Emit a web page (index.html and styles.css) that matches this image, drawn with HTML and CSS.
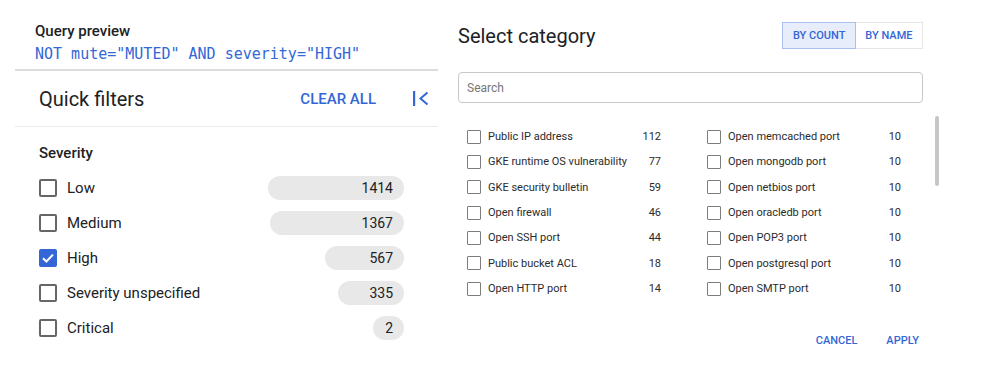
FILE: index.html
```html
<!DOCTYPE html>
<html>

<head>
    <meta charset="UTF-8">
    <title>Findings filters</title>
    <link rel="stylesheet" href="styles.css">
</head>

<body>
    <div class="page">
        <section class="filters">
            <div class="query">
                <div class="query-label">Query preview</div>
                <code class="query-text">NOT mute="MUTED" AND severity="HIGH"</code>
            </div>

            <div class="qf-header">
                <h2>Quick filters</h2>
                <button class="text-btn clear-all">CLEAR ALL</button>
                <svg class="collapse" width="16" height="16" viewBox="0 0 16 16">
                    <rect x="0" y="0" width="2.2" height="15" fill="#3367d6" />
                    <polyline points="14.5,1.5 7.5,7.5 14.5,13.5" fill="none" stroke="#3367d6" stroke-width="2" />
                </svg>
            </div>

            <div class="group">
                <h3>Severity</h3>
                <ul class="options">
                    <li class="option">
                        <span class="box"></span>
                        <span class="name">Low</span>
                        <span class="pill" style="width: 136px">1414</span>
                    </li>
                    <li class="option">
                        <span class="box"></span>
                        <span class="name">Medium</span>
                        <span class="pill" style="width: 134px">1367</span>
                    </li>
                    <li class="option">
                        <span class="box checked">
                            <svg width="14" height="14" viewBox="0 0 14 14">
                                <polyline points="2,7.2 5.4,10.5 12,3.6" fill="none" stroke="#fff" stroke-width="2" />
                            </svg>
                        </span>
                        <span class="name">High</span>
                        <span class="pill" style="width: 79px">567</span>
                    </li>
                    <li class="option">
                        <span class="box"></span>
                        <span class="name">Severity unspecified</span>
                        <span class="pill" style="width: 66px">335</span>
                    </li>
                    <li class="option">
                        <span class="box"></span>
                        <span class="name">Critical</span>
                        <span class="pill" style="width: 31px">2</span>
                    </li>
                </ul>
            </div>
        </section>

        <section class="category">
            <div class="cat-header">
                <h2>Select category</h2>
                <div class="toggle">
                    <button class="active">BY COUNT</button>
                    <button>BY NAME</button>
                </div>
            </div>

            <input class="search" type="text" placeholder="Search">

            <ul class="cat-list">
                <li class="cat-item"><span class="box"></span><span class="name">Public IP address</span><span class="count">112</span></li>
                <li class="cat-item"><span class="box"></span><span class="name">GKE runtime OS vulnerability</span><span class="count">77</span></li>
                <li class="cat-item"><span class="box"></span><span class="name">GKE security bulletin</span><span class="count">59</span></li>
                <li class="cat-item"><span class="box"></span><span class="name">Open firewall</span><span class="count">46</span></li>
                <li class="cat-item"><span class="box"></span><span class="name">Open SSH port</span><span class="count">44</span></li>
                <li class="cat-item"><span class="box"></span><span class="name">Public bucket ACL</span><span class="count">18</span></li>
                <li class="cat-item"><span class="box"></span><span class="name">Open HTTP port</span><span class="count">14</span></li>
                <li class="cat-item"><span class="box"></span><span class="name">Open memcached port</span><span class="count">10</span></li>
                <li class="cat-item"><span class="box"></span><span class="name">Open mongodb port</span><span class="count">10</span></li>
                <li class="cat-item"><span class="box"></span><span class="name">Open netbios port</span><span class="count">10</span></li>
                <li class="cat-item"><span class="box"></span><span class="name">Open oracledb port</span><span class="count">10</span></li>
                <li class="cat-item"><span class="box"></span><span class="name">Open POP3 port</span><span class="count">10</span></li>
                <li class="cat-item"><span class="box"></span><span class="name">Open postgresql port</span><span class="count">10</span></li>
                <li class="cat-item"><span class="box"></span><span class="name">Open SMTP port</span><span class="count">10</span></li>
            </ul>

            <!-- scrollbar thumb of the category list -->
            <div class="thumb"></div>

            <div class="cat-actions">
                <button class="text-btn">CANCEL</button>
                <button class="text-btn">APPLY</button>
            </div>
        </section>
    </div>
</body>

</html>
```

FILE: styles.css
```css
body {
    margin: 0;
    background: #fff;
    font-family: Roboto, "Liberation Sans", sans-serif;
    color: #202124;
}

button {
    border: none;
    background: none;
    padding: 0;
    font-family: inherit;
    cursor: pointer;
}

ul {
    list-style: none;
    margin: 0;
    padding: 0;
}

h2,
h3 {
    margin: 0;
    font-weight: 400;
}

.page {
    display: flex;
    gap: 20px;
    padding-left: 15px;
}

/* left panel */

.filters {
    width: 423px;
}

.query {
    padding: 21px 20px 5px;
    border-bottom: 2px solid #dcdcdc;
}

.query-label {
    font-size: 15px;
    font-weight: 500;
    line-height: 20px;
}

.query-text {
    display: block;
    margin-top: 3px;
    font-family: "DejaVu Sans Mono", "Liberation Mono", monospace;
    font-size: 15px;
    line-height: 20px;
    color: #3367d6;
}

.qf-header {
    display: flex;
    align-items: center;
    height: 55px;
    padding: 0 9px 0 24px;
    border-bottom: 1px solid #ebebeb;
}

.qf-header h2 {
    flex: 1;
    font-size: 20px;
    line-height: 28px;
}

.text-btn {
    color: #3367d6;
    font-weight: 500;
}

.clear-all {
    font-size: 15px;
    margin-right: 37px;
}

.group {
    padding: 16px 34px 0 24px;
}

.group h3 {
    font-size: 15px;
    font-weight: 500;
    line-height: 20px;
    margin-bottom: 8px;
}

.option {
    display: flex;
    align-items: center;
    height: 34.8px;
}

.box {
    flex: none;
    box-sizing: border-box;
    width: 18px;
    height: 18px;
    border: 2px solid #666;
    border-radius: 2px;
    margin-right: 10px;
    display: flex;
    align-items: center;
    justify-content: center;
}

.box.checked {
    background: #3367d6;
    border-color: #3367d6;
}

.option .name {
    flex: 1;
    font-size: 15px;
}

.pill {
    box-sizing: border-box;
    height: 24px;
    line-height: 24px;
    padding-right: 11px;
    border-radius: 12px;
    background: #e8e8e8;
    text-align: right;
    font-size: 14px;
}

/* right panel */

.category {
    position: relative;
    width: 465px;
    padding-top: 22px;
}

.cat-header {
    display: flex;
    align-items: center;
    justify-content: space-between;
    height: 27px;
}

.cat-header h2 {
    font-size: 20px;
    line-height: 28px;
}

.toggle {
    display: flex;
}

.toggle button {
    height: 27px;
    padding: 0 9.5px;
    font-size: 11px;
    font-weight: 500;
    color: #3367d6;
    border: 1px solid #e6e6e6;
    background: #fff;
}

.toggle button + button {
    border-left: none;
}

.toggle .active {
    background: #e7edfa;
    border-color: #a8bff0;
}

.search {
    display: block;
    box-sizing: border-box;
    width: 100%;
    height: 31px;
    margin-top: 23px;
    padding: 0 8px;
    border: 1px solid #c8c8c8;
    border-radius: 4px;
    font-family: inherit;
    font-size: 12px;
    color: #202124;
    outline: none;
}

.search::placeholder {
    color: #777;
}

.cat-list {
    display: grid;
    grid-template-columns: 194px 194px;
    grid-template-rows: repeat(7, 25.33px);
    grid-auto-flow: column;
    column-gap: 46px;
    padding: 21px 0 0 9px;
}

.cat-item {
    display: flex;
    align-items: center;
    font-size: 11px;
    color: #2b2b2b;
}

.cat-item .box {
    width: 14px;
    height: 14px;
    border: 1.5px solid #7c7c7c;
    border-radius: 1px;
    margin-right: 7px;
}

.cat-item .name {
    flex: 1;
}

.thumb {
    position: absolute;
    left: 477px;
    top: 116px;
    width: 4px;
    height: 70px;
    border-radius: 2px;
    background: #c6c6c6;
}

.cat-actions {
    display: flex;
    justify-content: flex-end;
    gap: 29px;
    margin-top: 32px;
    padding-right: 4px;
}

.cat-actions .text-btn {
    font-size: 11px;
    line-height: 16px;
}
```
